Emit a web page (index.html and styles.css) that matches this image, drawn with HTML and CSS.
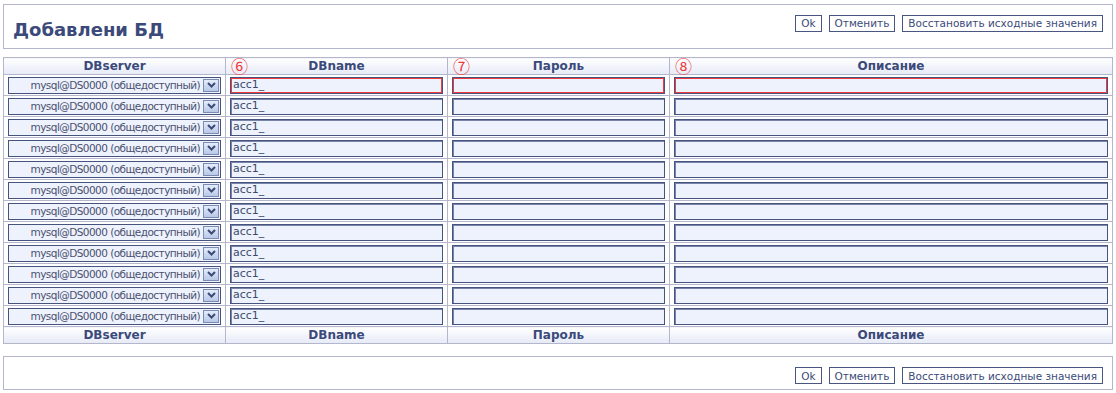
FILE: index.html
```html
<!DOCTYPE html>
<html lang="ru">
<head>
    <meta charset="UTF-8">
    <title>Добавлени БД</title>
    <link rel="stylesheet" href="styles.css">
</head>
<body>

    <div class="panel top">
        <h1>Добавлени БД</h1>
        <div class="actions">
            <button>Ok</button>
            <button>Отменить</button>
            <button>Восстановить исходные значения</button>
        </div>
    </div>

    <table class="grid">
        <thead>
            <tr>
                <th>DBserver</th>
                <th><span class="mark">⑥</span>DBname</th>
                <th><span class="mark">⑦</span>Пароль</th>
                <th><span class="mark">⑧</span>Описание</th>
            </tr>
        </thead>
        <tbody id="rows"></tbody>
        <tfoot>
            <tr>
                <th>DBserver</th>
                <th>DBname</th>
                <th>Пароль</th>
                <th>Описание</th>
            </tr>
        </tfoot>
    </table>

    <div class="panel bottom">
        <div class="actions">
            <button>Ok</button>
            <button>Отменить</button>
            <button>Восстановить исходные значения</button>
        </div>
    </div>

    <script>
        const body = document.getElementById("rows");
        for (let i = 0; i < 12; i++) {
            let tr = document.createElement("tr");
            let err = i === 0 ? " error" : "";
            tr.innerHTML =
                '<td><div class="select"><span>mysql@DS0000 (общедоступный)</span>' +
                '<i class="arrow"><svg width="9" height="6" viewBox="0 0 9 6"><path d="M1 1 L4.5 4.5 L8 1" fill="none" stroke="#3c4a78" stroke-width="2"/></svg></i></div></td>' +
                '<td><div class="field' + err + '">acc1_</div></td>' +
                '<td><div class="field' + err + '"></div></td>' +
                '<td><div class="field' + err + '"></div></td>';
            body.appendChild(tr);
        }
    </script>

</body>
</html>
```

FILE: styles.css
```css
body {
    margin: 0;
    padding: 4px 3px 0 3px;
    font-family: 'DejaVu Sans', Verdana, sans-serif;
    color: #3b4a7a;
    background: white;
}
.panel {
    border: 1px solid #b4b6cc;
    display: flex;
    align-items: center;
    justify-content: space-between;
    width: 1108px;
}
.panel.top {
    height: 43px;
}
.panel.bottom {
    height: 32px;
    margin-top: 12px;
    align-items: flex-end;
    justify-content: flex-end;
}
.panel.bottom .actions {
    margin-bottom: 5px;
}
h1 {
    margin: 0 0 0 9px;
    padding-top: 5px;
    font-size: 18px;
    font-weight: bold;
    color: #3b4a7a;
}
.actions {
    display: flex;
    gap: 7px;
    margin-right: 9px;
    margin-bottom: 7px;
}
button {
    font-family: 'DejaVu Sans', Verdana, sans-serif;
    font-size: 10.5px;
    color: #3b4a7a;
    background: white;
    border: 1px solid #4a5682;
    height: 17px;
    padding: 0 5px;
    margin: 0;
}
.grid {
    border-collapse: collapse;
    margin-top: 8px;
    width: 1110px;
    table-layout: fixed;
}
.grid th, .grid td {
    border: 1px solid #b4b6cc;
}
.grid th {
    height: 16px;
    padding: 0;
    font-size: 12px;
    font-weight: bold;
    color: #3b4a7a;
    background: linear-gradient(to bottom, #ffffff, #e6eaf7);
    position: relative;
}
.grid th:nth-child(1), .grid th:nth-child(2), .grid th:nth-child(3) {
    width: 221px;
}
.mark {
    position: absolute;
    left: 5px;
    top: -1px;
    font-family: 'Noto Sans CJK JP', 'DejaVu Sans', sans-serif;
    font-weight: normal;
    font-size: 17px;
    line-height: 18px;
    color: #ee3a3a;
}
.grid td {
    height: 20px;
    padding: 0 4px;
}
.field, .select {
    box-sizing: border-box;
    height: 17px;
    border: 1px solid #46537e;
    box-shadow: inset 1px 1px 0 #7884aa;
    background: #eef2fc;
    font-size: 11px;
    line-height: 14px;
    color: #3b4a6a;
    padding-left: 2px;
}
.field.error {
    box-shadow: inset 0 0 0 1px #ef3b3b;
}
.select {
    display: flex;
    align-items: center;
    justify-content: flex-end;
    padding: 0 1px 0 0;
    box-shadow: none;
    color: #4a5070;
}
.select span {
    margin-right: 3px;
    font-size: 10.5px;
    letter-spacing: -0.55px;
}
.arrow {
    width: 16px;
    height: 13px;
    box-sizing: border-box;
    border: 1px solid #7a8cb4;
    background: linear-gradient(to bottom, #e4ecfa, #b8c8e6);
    display: flex;
    align-items: center;
    justify-content: center;
}
```
